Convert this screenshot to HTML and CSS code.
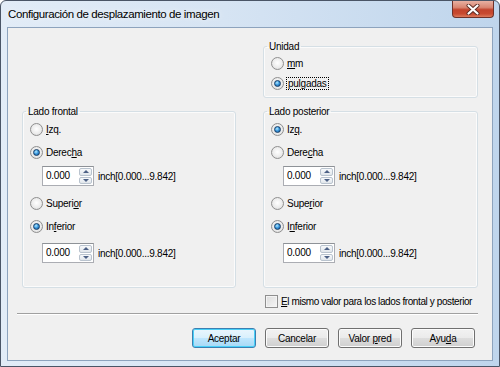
FILE: index.html
```html
<!DOCTYPE html>
<html lang="es">
<head>
    <meta charset="UTF-8">
    <title>Configuración de desplazamiento de imagen</title>
    <link rel="stylesheet" href="styles.css">
</head>
<body>
    <div class="window">
        <div class="titlebar">
            <span class="title">Configuración de desplazamiento de imagen</span>
            <div class="close">
                <svg width="14" height="11" viewBox="0 0 14 11">
                    <path d="M2.5 1.5l9 8M11.5 1.5l-9 8" stroke="#5a2a22" stroke-width="4" stroke-linecap="round"/>
                    <path d="M2.5 1.5l9 8M11.5 1.5l-9 8" stroke="#fff" stroke-width="2.2" stroke-linecap="round"/>
                </svg>
            </div>
        </div>

        <div class="client">
            <div class="groups">
                <fieldset class="group unit">
                    <legend>Unidad</legend>
                    <div class="opt small"><span class="radio"></span><span><u>m</u>m</span></div>
                    <div class="opt small"><span class="radio on"></span><span class="focus">pul<u>g</u>adas</span></div>
                </fieldset>

                <fieldset class="group side">
                    <legend>Lado frontal</legend>
                    <div class="opt"><span class="radio"></span><span><u>I</u>zq.</span></div>
                    <div class="opt"><span class="radio on"></span><span>Derec<u>h</u>a</span></div>
                    <div class="spin-row">
                        <div class="spin">
                            <span class="value">0.000</span>
                            <span class="arrows"><span class="up"></span><span class="down"></span></span>
                        </div>
                        <span class="range">inch[0.000...9.842]</span>
                    </div>
                    <div class="opt gap"><span class="radio"></span><span>Superi<u>o</u>r</span></div>
                    <div class="opt"><span class="radio on"></span><span>In<u>f</u>erior</span></div>
                    <div class="spin-row low">
                        <div class="spin">
                            <span class="value">0.000</span>
                            <span class="arrows"><span class="up"></span><span class="down"></span></span>
                        </div>
                        <span class="range">inch[0.000...9.842]</span>
                    </div>
                </fieldset>

                <fieldset class="group side">
                    <legend>Lado posterior</legend>
                    <div class="opt"><span class="radio on"></span><span>Iz<u>q</u>.</span></div>
                    <div class="opt"><span class="radio"></span><span>Dere<u>c</u>ha</span></div>
                    <div class="spin-row">
                        <div class="spin">
                            <span class="value">0.000</span>
                            <span class="arrows"><span class="up"></span><span class="down"></span></span>
                        </div>
                        <span class="range">inch[0.000...9.842]</span>
                    </div>
                    <div class="opt gap"><span class="radio"></span><span>Supe<u>r</u>ior</span></div>
                    <div class="opt"><span class="radio on"></span><span>I<u>n</u>ferior</span></div>
                    <div class="spin-row low">
                        <div class="spin">
                            <span class="value">0.000</span>
                            <span class="arrows"><span class="up"></span><span class="down"></span></span>
                        </div>
                        <span class="range">inch[0.000...9.842]</span>
                    </div>
                </fieldset>

                <div class="same"><span class="check"></span><span><u>E</u>l mismo valor para los lados frontal y posterior</span></div>
            </div>

            <div class="separator"></div>

            <div class="buttons">
                <button class="btn default">Aceptar</button>
                <button class="btn">Cancelar</button>
                <button class="btn">Valor <u>p</u>red</button>
                <button class="btn">Ayu<u>d</u>a</button>
            </div>
        </div>
    </div>
</body>
</html>
```

FILE: styles.css
```css
/* General */
body {
    margin: 0;
    font-family: "Liberation Sans", Arial, sans-serif;
    font-size: 10px;
    letter-spacing: -0.25px;
    color: #000;
    background: #fff;
    white-space: nowrap;
}

/* Window frame */
.window {
    width: 500px;
    height: 367px;
    box-sizing: border-box;
    border: 1px solid #4a5566;
    border-radius: 6px 6px 0 0;
    background: linear-gradient(to right, #e2ecf7 0%, #d6e4f3 45%, #bfd5ec 100%);
    display: flex;
    flex-direction: column;
}

.titlebar {
    height: 26px;
    display: flex;
    padding-left: 7px;
}
.title {
    font-size: 11.5px;
    letter-spacing: -0.4px;
    line-height: 26px;
    text-shadow: 0 0 6px #fff;
}
.close {
    margin-left: auto;
    margin-right: 5px;
    width: 42px;
    height: 17px;
    box-sizing: border-box;
    border: 1px solid #6e3129;
    border-top: none;
    border-radius: 0 0 4px 4px;
    background: linear-gradient(#e8b0a2 0%, #d98672 40%, #c2432c 55%, #c84a30 80%, #dd7a5c 100%);
    display: flex;
    align-items: center;
    justify-content: center;
}

/* Client area */
.client {
    flex: 1;
    margin: 0 6px 5px;
    border: 1px solid #8da3bd;
    background: #f0f0f0;
    padding: 12px 14px 0;
}

.groups {
    display: grid;
    grid-template-columns: 214px 215px;
    column-gap: 27px;
    row-gap: 7px;
}

.group {
    margin: 0;
    padding: 0 0 0 7px;
    border: 1px solid #d5dfe5;
    border-radius: 3px;
    box-shadow: inset 0 0 0 1px #fbfbfb;
    min-width: 0;
}
.group legend {
    padding: 0 2px;
    margin-left: -4px;
    line-height: 13px;
}

.unit {
    grid-column: 2;
    padding-bottom: 4px;
}
.side {
    padding-bottom: 24px;
}

/* Radio options */
.opt {
    height: 23px;
    display: flex;
    align-items: center;
    gap: 3px;
}
.opt.small {
    height: 20px;
}
.opt.gap {
    margin-top: 6px;
}

.radio {
    width: 11px;
    height: 11px;
    border: 1px solid #8f8f8f;
    border-radius: 50%;
    background: radial-gradient(circle at 50% 45%, #ffffff 0%, #ececec 55%, #d2d2d2 100%);
    display: flex;
    align-items: center;
    justify-content: center;
}
.radio.on::after {
    content: "";
    width: 5px;
    height: 5px;
    border-radius: 50%;
    border: 1px solid #163d66;
    background: radial-gradient(circle at 40% 35%, #b6ebff 0%, #3d9be0 45%, #0f4f8f 100%);
}

.focus {
    outline: 1px dotted #000;
    outline-offset: 0;
    padding: 0 1px;
}

/* Spin box */
.spin-row {
    display: flex;
    align-items: center;
    gap: 4px;
    margin: 2px 0 0 12px;
}
.spin-row.low {
    margin-top: 5px;
}
.spin {
    width: 52px;
    height: 20px;
    box-sizing: border-box;
    border: 1px solid #abadb3;
    border-top-color: #8e9297;
    background: #fff;
    display: flex;
}
.value {
    flex: 1;
    padding: 3px 0 0 3px;
}
.arrows {
    width: 13px;
    display: flex;
    flex-direction: column;
    gap: 1px;
    padding: 1px 1px 1px 0;
}
.arrows span {
    flex: 1;
    border: 1px solid #b9c3ce;
    border-radius: 2px;
    background: linear-gradient(#f7f9fb, #e1e6eb);
    display: flex;
    align-items: center;
    justify-content: center;
}
.arrows .up::after {
    content: "";
    border: 3px solid transparent;
    border-top: none;
    border-bottom: 3px solid #4d6185;
}
.arrows .down::after {
    content: "";
    border: 3px solid transparent;
    border-bottom: none;
    border-top: 3px solid #4d6185;
}

/* Checkbox */
.same {
    grid-column: 2;
    margin-left: 2px;
    height: 13px;
    display: flex;
    align-items: center;
    gap: 3px;
    letter-spacing: -0.4px;
}
.check {
    width: 11px;
    height: 11px;
    border: 1px solid #8f8f8f;
    background: linear-gradient(135deg, #dcdcdc, #f6f6f6);
    box-shadow: inset 0 0 0 1px #f4f4f4;
}

.separator {
    margin: 5px 0 0 -5px;
    border-top: 1px solid #a0a0a0;
    border-bottom: 1px solid #fff;
}

/* Buttons */
.buttons {
    display: flex;
    justify-content: flex-end;
    gap: 9px;
    margin: 13px 3px 0 0;
}
.btn {
    width: 64px;
    height: 20px;
    padding: 0;
    font: inherit;
    letter-spacing: inherit;
    color: #000;
    border: 1px solid #707070;
    border-radius: 3px;
    background: linear-gradient(#f2f2f2 0%, #ebebeb 48%, #dddddd 52%, #cfcfcf 100%);
    box-shadow: inset 0 0 0 1px #fcfcfc;
}
.btn.default {
    border-color: #3c7fb1;
    background: linear-gradient(#eaf6fd 0%, #d9f0fc 48%, #bee6fd 52%, #a7d9f5 100%);
    box-shadow: inset 0 0 0 1px #48d0f8;
}
```
